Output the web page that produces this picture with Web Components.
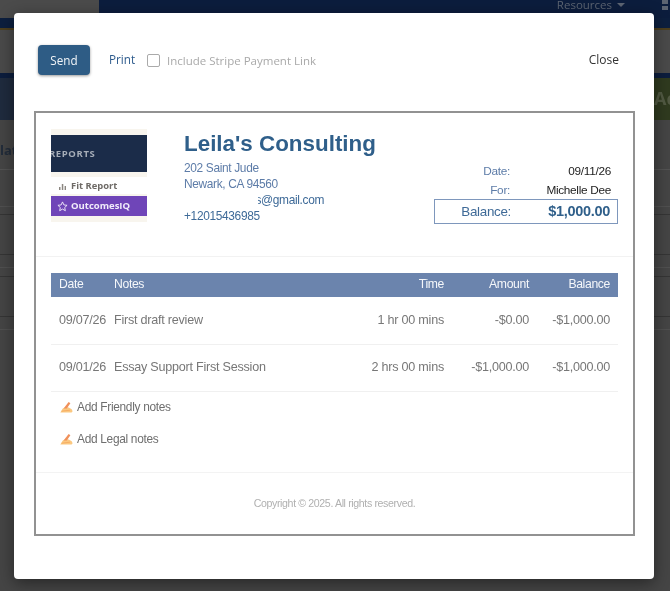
<!DOCTYPE html>
<html><head><meta charset="utf-8"><style>
html,body{margin:0;padding:0;width:670px;height:591px;overflow:hidden;background:#444}
body{filter:blur(.3px)}
</style></head><body>
<app-backdrop></app-backdrop>
<invoice-modal>
  <modal-toolbar slot="toolbar"></modal-toolbar>
  <invoice-sheet slot="sheet">
    <invoice-head></invoice-head>
    <invoice-table></invoice-table>
    <note-link>Add Friendly notes</note-link>
    <note-link>Add Legal notes</note-link>
    <invoice-foot></invoice-foot>
  </invoice-sheet>
</invoice-modal>
<script>
function def(name,html){customElements.define(name,class extends HTMLElement{constructor(){super();this.attachShadow({mode:'open'}).innerHTML=html;}});}
def('app-backdrop',`<style>
:host{display:block;width:670px;height:591px;background:#454545;font-family:"Open Sans",sans-serif;overflow:hidden}
.top{display:flex;height:18px}.top i{width:99px;background:#4b4b4b}
.nav{flex:1;background:#0c1d3d;color:#5c6472;font-size:11.5px;line-height:9px;display:flex;justify-content:flex-end;gap:5px;padding-right:45px;position:relative}
.tri{width:0;height:0;border:4px solid transparent;border-top:4px solid #5c6472;border-bottom:0;margin-top:3px}
.sq{position:absolute;right:2px;top:0;width:6px;height:4px;background:#5c6472;box-shadow:0 6px 0 #5c6472}
.strip{height:10px;background:#0d1f3e}.gold{height:2px;background:#4d3f1e}
.g{height:43px;background:#4a4a4a}.n{height:5px;background:#0c1d3d}
.band{height:42px;display:flex;justify-content:space-between;background:#1f2b3e}
.band b{width:16px;background:#2f3a1f;color:#525a43;font-size:18px;line-height:40px;overflow:hidden;box-sizing:border-box;white-space:nowrap}
.lat{height:49px;font-size:13px;font-weight:700;line-height:60px;color:#222c3a;border-bottom:1px solid #535353;white-space:nowrap}
.r{box-sizing:border-box;border-bottom:1px solid #353535}
.l{border-color:#505050}
</style><div class="top"><i></i><div class="nav"><span>Resources</span><span class="tri"></span><span class="sq"></span></div></div>
<div class="strip"></div><div class="gold"></div><div class="g"></div><div class="n"></div>
<div class="band"><span></span><b>Ac</b></div>
<div class="lat">lat</div>
<div class="r l" style="height:37px"></div>
<div class="r" style="height:8px"></div>
<div class="r" style="height:40px"></div>
<div class="r l" style="height:13px"></div>
<div class="r" style="height:9px"></div>
<div class="r" style="height:40px"></div>
<div class="r l" style="height:13px"></div>`);
def('invoice-modal',`<style>
:host{display:flex;flex-direction:column;position:absolute;left:14px;top:13px;width:640px;height:566px;background:#fff;border-radius:4px;box-shadow:0 4px 16px rgba(0,0,0,.45);padding:32px 19px 0 20px;box-sizing:border-box}
</style><slot name="toolbar"></slot><slot name="sheet"></slot>`);
def('modal-toolbar',`<style>
:host{display:flex;align-items:center;height:30px;margin:0 16px 36px 4px;font-family:"Open Sans",sans-serif;font-size:11.7px}
button{all:unset;box-sizing:border-box;width:52px;height:30px;background:#2e5c85;color:#f2f5f8;border-radius:4px;text-align:center;line-height:31px;box-shadow:0 1px 3px rgba(0,0,0,.4);font-size:11.7px}
a{color:#2c5a8c;margin:-2px 0 0 19px;width:38px}
.cb{width:13px;height:13px;border:1.5px solid #aaa;border-radius:2px;box-sizing:border-box}
label{color:#a9a9a9;margin-left:7px;font-size:11.5px}
.close{margin:-2px 0 0 auto;color:#333;font-size:12px}
</style><button>Send</button><a>Print</a><span class="cb"></span><label>Include Stripe Payment Link</label><span class="close">Close</span>`);
def('invoice-sheet',`<style>
:host{display:block;height:425px;box-sizing:border-box;border:2px solid #929292;font-family:"Liberation Sans",Arial,sans-serif}
</style><slot></slot>`);
def('invoice-head',`<style>
:host{display:flex;height:144px;box-sizing:border-box;padding:16px 15px 0 15px;border-bottom:1px solid #f2f2f2}
.logo{width:96px;height:93px;background:#f8f5ee;display:flex;flex-direction:column;flex:none;overflow:hidden}
.bar{margin-top:6px;height:37px;background:#1b2c49;color:#a6adb8;font:700 9.5px/37px "Open Sans",sans-serif;letter-spacing:.6px;white-space:nowrap;text-indent:-2px}
.fit{margin-top:5px;height:17px;background:#fff;color:#6e6a66;font:700 9.4px/17px "Open Sans",sans-serif;display:flex;align-items:center;gap:4px;padding-left:7px}
.iq{margin-top:2px;height:20px;background:#6f45b8;color:#f1ecfa;font:700 9.5px/20px "Open Sans",sans-serif;display:flex;align-items:center;gap:3px;padding-left:6px}
.info{margin-left:37px;color:#5d7ca8;font-size:11.9px;letter-spacing:-.33px;line-height:16px;width:210px}
h1{margin:1px 0 2px;font-size:22.4px;letter-spacing:0;line-height:28px;color:#2f5f8a;font-weight:700;white-space:nowrap}
.em{display:block;color:#3e6a98;margin-left:74px;white-space:nowrap;width:66px;overflow:hidden;direction:rtl}
.ph{color:#3e6a98;display:block}
.meta{margin-left:auto;width:184px;padding-top:33px;font-size:11.8px;letter-spacing:-.3px}
.m{display:grid;grid-template-columns:76px 1fr;height:19px;line-height:19px;text-align:right;padding-right:7px;color:#222}
.m span:first-child{color:#5d7ca8}
.bal{display:grid;grid-template-columns:76px 1fr;box-sizing:border-box;height:25px;margin-top:-1px;border:1px solid #7e97bc;line-height:23px;text-align:right;padding-right:7px;color:#3f6a97;font-size:13.4px}
.bal b{color:#2f5f8a;font-size:14.5px}
svg{flex:none}
</style>
<div class="logo"><div class="bar">REPORTS</div>
<div class="fit"><svg width="9" height="8" viewBox="0 0 9 8"><path d="M1 8V5h1.5v3zM3.8 8V2h1.5v6zM6.6 8V4H8v4z" fill="#8b8680"/></svg><span>Fit Report</span></div>
<div class="iq"><svg width="11" height="11" viewBox="0 0 12 12"><path d="M6 1l1.5 3.3 3.5.4-2.6 2.4.7 3.5L6 8.8l-3.1 1.8.7-3.5L1 4.7l3.5-.4z" fill="none" stroke="#f1ecfa" stroke-width="1"/></svg><span>OutcomesIQ</span></div></div>
<div class="info"><h1>Leila's Consulting</h1><div>202 Saint Jude</div><div>Newark, CA 94560</div><span class="em">s@gmail.com</span><span class="ph">+12015436985</span></div>
<div class="meta"><div class="m"><span>Date:</span><span>09/11/26</span></div><div class="m"><span>For:</span><span>Michelle Dee</span></div><div class="bal"><span>Balance:</span><b>$1,000.00</b></div></div>`);
def('invoice-table',`<style>
:host{display:block;margin:16px 15px -1px;font-size:12.6px;letter-spacing:-.24px;color:#777}
.row{display:grid;box-sizing:border-box;grid-template-columns:56px 1fr 110px 85px 89px;height:47px;line-height:46px;border-bottom:1px solid #f0f0f0}
.row.first{height:48px;line-height:47px}
.row.second{line-height:45px}
.row span:first-child{padding-left:8px}
.row span:nth-child(n+3){text-align:right}
.row span:last-child{padding-right:8px}
.row span:nth-child(2){padding-left:7px;white-space:nowrap}
.row.h{height:24px;line-height:23px;background:#6b84ad;color:#f5f7fa;border:0;font-size:12.2px;letter-spacing:-.35px}
</style>
<div class="row h"><span>Date</span><span>Notes</span><span>Time</span><span>Amount</span><span>Balance</span></div>
<div class="row first"><span>09/07/26</span><span>First draft review</span><span>1 hr 00 mins</span><span>-$0.00</span><span>-$1,000.00</span></div>
<div class="row second"><span>09/01/26</span><span>Essay Support First Session</span><span>2 hrs 00 mins</span><span>-$1,000.00</span><span>-$1,000.00</span></div>`);
def('note-link',`<style>
:host{display:flex;align-items:center;gap:4px;height:32px;padding-left:24px;font-size:11.9px;letter-spacing:-.3px;color:#6e6e6e}
</style><svg width="13" height="12" viewBox="0 0 13 12"><path d="M.3 11.6 2.8 7.6 5.5 6l3.2.6 3 1.6.9 2-1 1.4z" fill="#fbc880"/><path d="M3.6 7.6 8.6 1l1.8 1.2L6.8 7.4z" fill="#f0905a"/><path d="M1.6 10.2 10 9.2" stroke="#f7ae64" stroke-width="1"/></svg><slot></slot>`);
def('invoice-foot',`<style>
:host{display:block;margin-top:17px;height:61px;border-top:1px solid #f3f3f3;text-align:center;line-height:60px;font-size:10.6px;letter-spacing:-.37px;color:#b0b0b0}
</style>Copyright © 2025. All rights reserved.`);
</script></body></html>
